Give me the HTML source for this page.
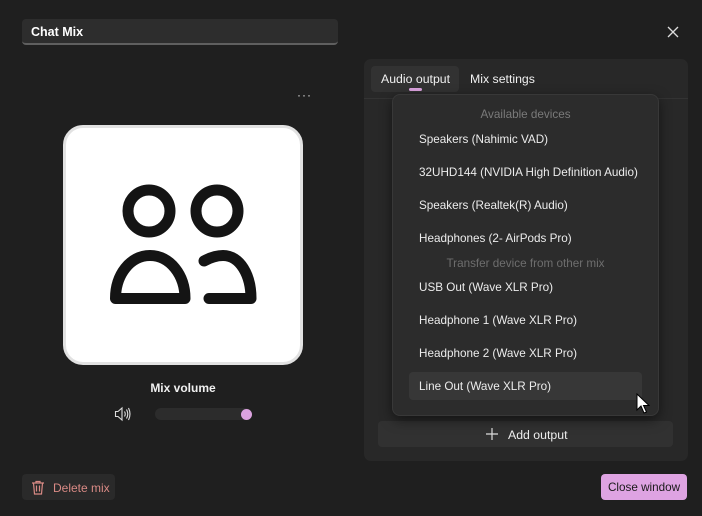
<!DOCTYPE html>
<html><head><style>
*{margin:0;padding:0;box-sizing:border-box}
body{width:702px;height:516px;background:#1f1f1f;font-family:"Liberation Sans",sans-serif;color:#e8e8e8;position:relative;overflow:hidden;font-size:12.5px}
.abs{position:absolute}
.item{position:absolute;left:419px;font-size:11.7px;color:#ececec;white-space:nowrap}
.hdr{position:absolute;left:392px;width:267px;text-align:center;font-size:11.7px;color:#7a7a7a}
</style></head><body>
<div class="abs" style="left:22px;top:19px;width:316px;height:26px;background:#2d2d2d;border-radius:4px;border-bottom:2px solid #5f5f5f"></div>
<div class="abs" style="left:31px;top:25px;font-weight:bold;font-size:12.5px;color:#fff">Chat Mix</div>
<svg class="abs" style="left:667px;top:26px" width="12" height="12"><path d="M1 1L11 11M11 1L1 11" stroke="#ddd" stroke-width="1.3"/></svg>
<div class="abs" style="left:297px;top:88px;font-size:12px;color:#ddd;letter-spacing:1px">···</div>

<div class="abs" style="left:63px;top:125px;width:240px;height:240px;background:#fff;border:3px solid #e2e2e2;border-radius:20px"></div>
<svg class="abs" style="left:0;top:0" width="320" height="380" fill="none" stroke="#141414" stroke-width="11" stroke-linecap="round" stroke-linejoin="round">
<circle cx="149" cy="211" r="21"/><circle cx="217" cy="211" r="21"/>
<path d="M115.5 298.5C115.5 275 130 255.5 150 255.5S185 275 185 298.5Z"/>
<path d="M204 261Q214 255.5 223 255.5C240 255.5 251 275 251 298.5H209"/>
</svg>

<div class="abs" style="left:0;width:366px;top:381px;text-align:center;font-size:12px;color:#f0f0f0;font-weight:bold">Mix volume</div>
<svg class="abs" style="left:114px;top:406px" width="18" height="16" fill="none" stroke="#ddd" stroke-width="1.1"><path d="M1.5 5.5H4L8 2V14L4 10.5H1.5Z"/><path d="M10.5 5.5Q12 8 10.5 10.5M12.5 3.5Q15 8 12.5 12.5M14.5 2Q17.5 8 14.5 14"/></svg>
<div class="abs" style="left:155px;top:408px;width:96px;height:12px;background:#2c2c2c;border-radius:6px"></div>
<div class="abs" style="left:241px;top:409px;width:11px;height:11px;background:#dba2df;border-radius:50%"></div>

<div class="abs" style="left:22px;top:474px;width:93px;height:26px;background:#2a2a2a;border-radius:4px"></div>
<svg class="abs" style="left:31px;top:480px" width="14" height="15" fill="none" stroke="#d98a85" stroke-width="1.2"><path d="M1 3H13M5 3V1.5H9V3M2.5 3L3.5 14H10.5L11.5 3M5.5 5.5V11.5M8.5 5.5V11.5"/></svg>
<div class="abs" style="left:53px;top:481px;font-size:12px;color:#d98a85">Delete mix</div>
<div class="abs" style="left:601px;top:474px;width:86px;height:26px;background:#dea3e2;border-radius:4px;color:#1a1a1a;font-size:11.7px;text-align:center;line-height:28px">Close window</div>

<div class="abs" style="left:364px;top:59px;width:324px;height:402px;background:#282828;border-radius:7px"></div>
<div class="abs" style="left:364px;top:98px;width:324px;height:1px;background:#333"></div>
<div class="abs" style="left:371px;top:66px;width:88px;height:26px;background:#323232;border-radius:4px"></div>
<div class="abs" style="left:381px;top:72px;font-size:12.3px;color:#f0f0f0">Audio output</div>
<div class="abs" style="left:409px;top:88px;width:13px;height:3px;background:#dba2df;border-radius:2px"></div>
<div class="abs" style="left:470px;top:72px;font-size:12.3px;color:#f0f0f0">Mix settings</div>
<div class="abs" style="left:378px;top:421px;width:295px;height:26px;background:#313131;border-radius:4px"></div>
<svg class="abs" style="left:486px;top:428px" width="12" height="12"><path d="M6 0V12M0 6H12" stroke="#ddd" stroke-width="1.2"/></svg>
<div class="abs" style="left:508px;top:428px;font-size:12.3px;color:#eee">Add output</div>

<div class="abs" style="left:392px;top:94px;width:267px;height:322px;background:#2c2c2c;border:1px solid #383838;border-radius:8px;box-shadow:0 4px 12px rgba(0,0,0,.5)"></div>
<div class="abs" style="left:409px;top:372px;width:233px;height:28px;background:#373737;border-radius:4px"></div>
<div class="hdr" style="top:108px">Available devices</div>
<div class="item" style="top:133px">Speakers (Nahimic VAD)</div>
<div class="item" style="top:166px">32UHD144 (NVIDIA High Definition Audio)</div>
<div class="item" style="top:199px">Speakers (Realtek(R) Audio)</div>
<div class="item" style="top:232px">Headphones (2- AirPods Pro)</div>
<div class="hdr" style="top:257px;color:#6e6e6e">Transfer device from other mix</div>
<div class="item" style="top:281px">USB Out (Wave XLR Pro)</div>
<div class="item" style="top:314px">Headphone 1 (Wave XLR Pro)</div>
<div class="item" style="top:347px">Headphone 2 (Wave XLR Pro)</div>
<div class="item" style="top:380px">Line Out (Wave XLR Pro)</div>
<svg class="abs" style="left:636px;top:393px" width="14" height="22"><path d="M1 1V17L5 13L8 20L10.5 19L7.5 12.5H13Z" fill="#fff" stroke="#000" stroke-width="1"/></svg>
</body></html>
